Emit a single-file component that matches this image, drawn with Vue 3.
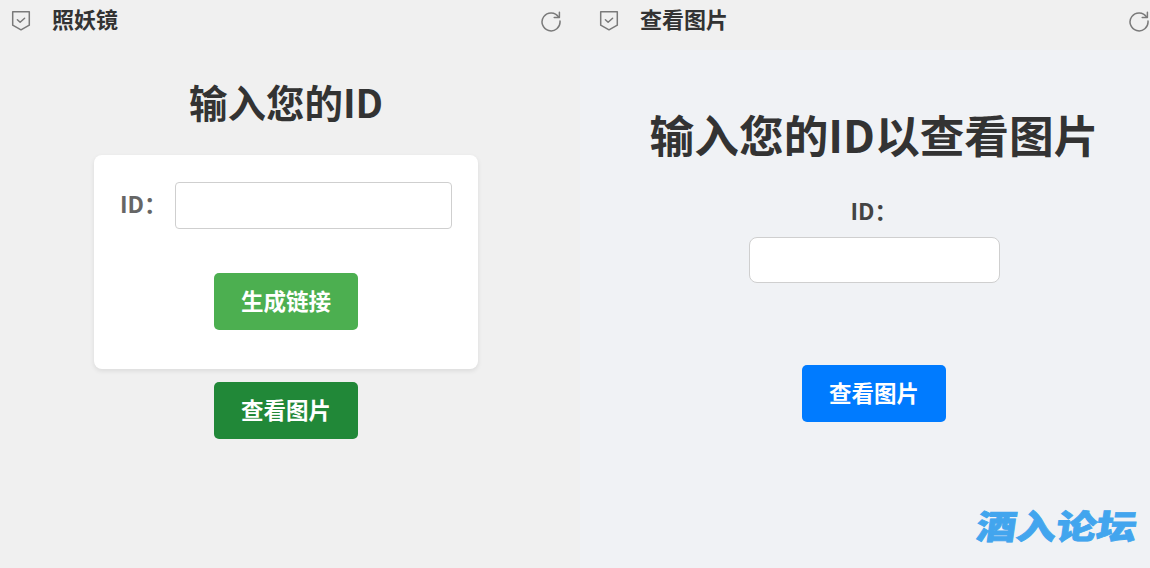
<script setup>
import { ref } from 'vue'

const leftId = ref('')
const rightId = ref('')
</script>

<template>
  <div class="screens">
    <section class="screen screen--left">
      <header class="titlebar">
        <svg class="titlebar__shield" viewBox="0 0 20 22" width="20" height="22" fill="none" stroke="#7a7a7a" stroke-width="1.5" stroke-linejoin="round" stroke-linecap="round">
          <path d="M1.7 1.8h16.6v13.4l-8.3 4.6-8.3-4.6z" />
          <path d="M6.4 9.8l2.7 2.5 4.5-4" />
        </svg>
        <span class="titlebar__title">照妖镜</span>
        <svg class="titlebar__reload" viewBox="0 0 22 22" width="22" height="22" fill="none" stroke="#7a7a7a" stroke-width="1.5" stroke-linecap="round" stroke-linejoin="round">
          <path d="M18.6 7A9 9 0 1 0 20 11" />
          <path d="M19.4 2.2V7.4H14.2" />
        </svg>
      </header>
      <div class="left-body">
        <h1 class="left-body__heading">输入您的ID</h1>
        <div class="card">
          <div class="field-row">
            <label class="field-row__label">ID：</label>
            <input v-model="leftId" class="text-input" type="text" />
          </div>
          <button class="btn btn--green">生成链接</button>
        </div>
        <button class="btn btn--dark">查看图片</button>
      </div>
    </section>

    <section class="screen screen--right">
      <header class="titlebar titlebar--right">
        <svg class="titlebar__shield" viewBox="0 0 20 22" width="20" height="22" fill="none" stroke="#7a7a7a" stroke-width="1.5" stroke-linejoin="round" stroke-linecap="round">
          <path d="M1.7 1.8h16.6v13.4l-8.3 4.6-8.3-4.6z" />
          <path d="M6.4 9.8l2.7 2.5 4.5-4" />
        </svg>
        <span class="titlebar__title">查看图片</span>
        <svg class="titlebar__reload" viewBox="0 0 22 22" width="22" height="22" fill="none" stroke="#7a7a7a" stroke-width="1.5" stroke-linecap="round" stroke-linejoin="round">
          <path d="M18.6 7A9 9 0 1 0 20 11" />
          <path d="M19.4 2.2V7.4H14.2" />
        </svg>
      </header>
      <div class="right-body">
        <h1 class="right-body__heading">输入您的ID以查看图片</h1>
        <label class="right-body__label">ID：</label>
        <input v-model="rightId" class="text-input text-input--right" type="text" />
        <button class="btn btn--blue">查看图片</button>
      </div>
      <div class="watermark">酒入论坛</div>
    </section>
  </div>
</template>

<style>
html,
body {
  margin: 0;
  background: #f0f0f0;
}
</style>

<style scoped>
.screens {
  display: flex;
  width: 1150px;
  height: 568px;
  overflow: hidden;
  font-family: "Noto Sans CJK SC", "Noto Sans", sans-serif;
}

.screen {
  position: relative;
  flex: none;
  height: 568px;
  overflow: hidden;
}

.screen--left {
  width: 580px;
  background: #f0f0f0;
}

.screen--right {
  width: 570px;
}

.titlebar {
  display: flex;
  align-items: center;
  box-sizing: border-box;
  width: 572px;
  height: 42px;
  padding: 0 10px 0 11px;
}

.titlebar--right {
  width: 588px;
  height: 50px;
  padding: 0 18px 8px 19px;
  background: #f0f0f0;
}

.titlebar__title {
  margin-left: 21px;
  padding-bottom: 6px;
  font-size: 22px;
  font-weight: 700;
  color: #333;
}

.titlebar__reload {
  margin-left: auto;
}

.left-body {
  display: flex;
  flex-direction: column;
  align-items: center;
  width: 572px;
}

.left-body__heading {
  margin: 30px 0 24px;
  font-size: 38.5px;
  line-height: 59px;
  font-weight: 700;
  color: #333;
}

.card {
  display: flex;
  flex-direction: column;
  align-items: center;
  box-sizing: border-box;
  width: 384px;
  height: 214px;
  padding-top: 27px;
  background: #fff;
  border-radius: 8px;
  box-shadow: 0 2px 5px rgba(0, 0, 0, 0.09);
}

.field-row {
  display: flex;
  align-items: center;
  align-self: stretch;
  padding: 0 26px;
}

.field-row__label {
  width: 55px;
  padding-bottom: 5px;
  font-size: 23px;
  font-weight: 700;
  color: #666;
}

.text-input {
  box-sizing: border-box;
  width: 277px;
  height: 47px;
  background: #fff;
  border: 1px solid #cfcfcf;
  border-radius: 4px;
  outline: none;
}

.text-input--right {
  width: 251px;
  height: 46px;
  border-radius: 8px;
}

.btn {
  width: 144px;
  height: 57px;
  padding: 0 0 4px;
  font-family: inherit;
  font-size: 22.5px;
  font-weight: 700;
  color: #fff;
  border: none;
  border-radius: 5px;
}

.btn--green {
  margin-top: 44px;
  background: #4caf50;
}

.btn--dark {
  margin-top: 13px;
  background: #218838;
}

.btn--blue {
  margin-top: 82px;
  background: #007bff;
}

.right-body {
  display: flex;
  flex-direction: column;
  align-items: center;
  width: 588px;
  height: 518px;
  background: #f0f2f5;
}

.right-body__heading {
  margin: 50px 0 25px;
  font-size: 44.7px;
  line-height: 68px;
  font-weight: 700;
  color: #333;
}

.right-body__label {
  margin-bottom: 10px;
  font-size: 23px;
  line-height: 34px;
  font-weight: 700;
  color: #444;
}

.watermark {
  position: absolute;
  right: 13px;
  bottom: 21px;
  font-size: 40px;
  line-height: 44px;
  font-weight: 900;
  color: #42a5ee;
  -webkit-text-stroke: 1px #42a5ee;
  transform: skewX(-8deg) scaleY(0.84);
}
</style>
